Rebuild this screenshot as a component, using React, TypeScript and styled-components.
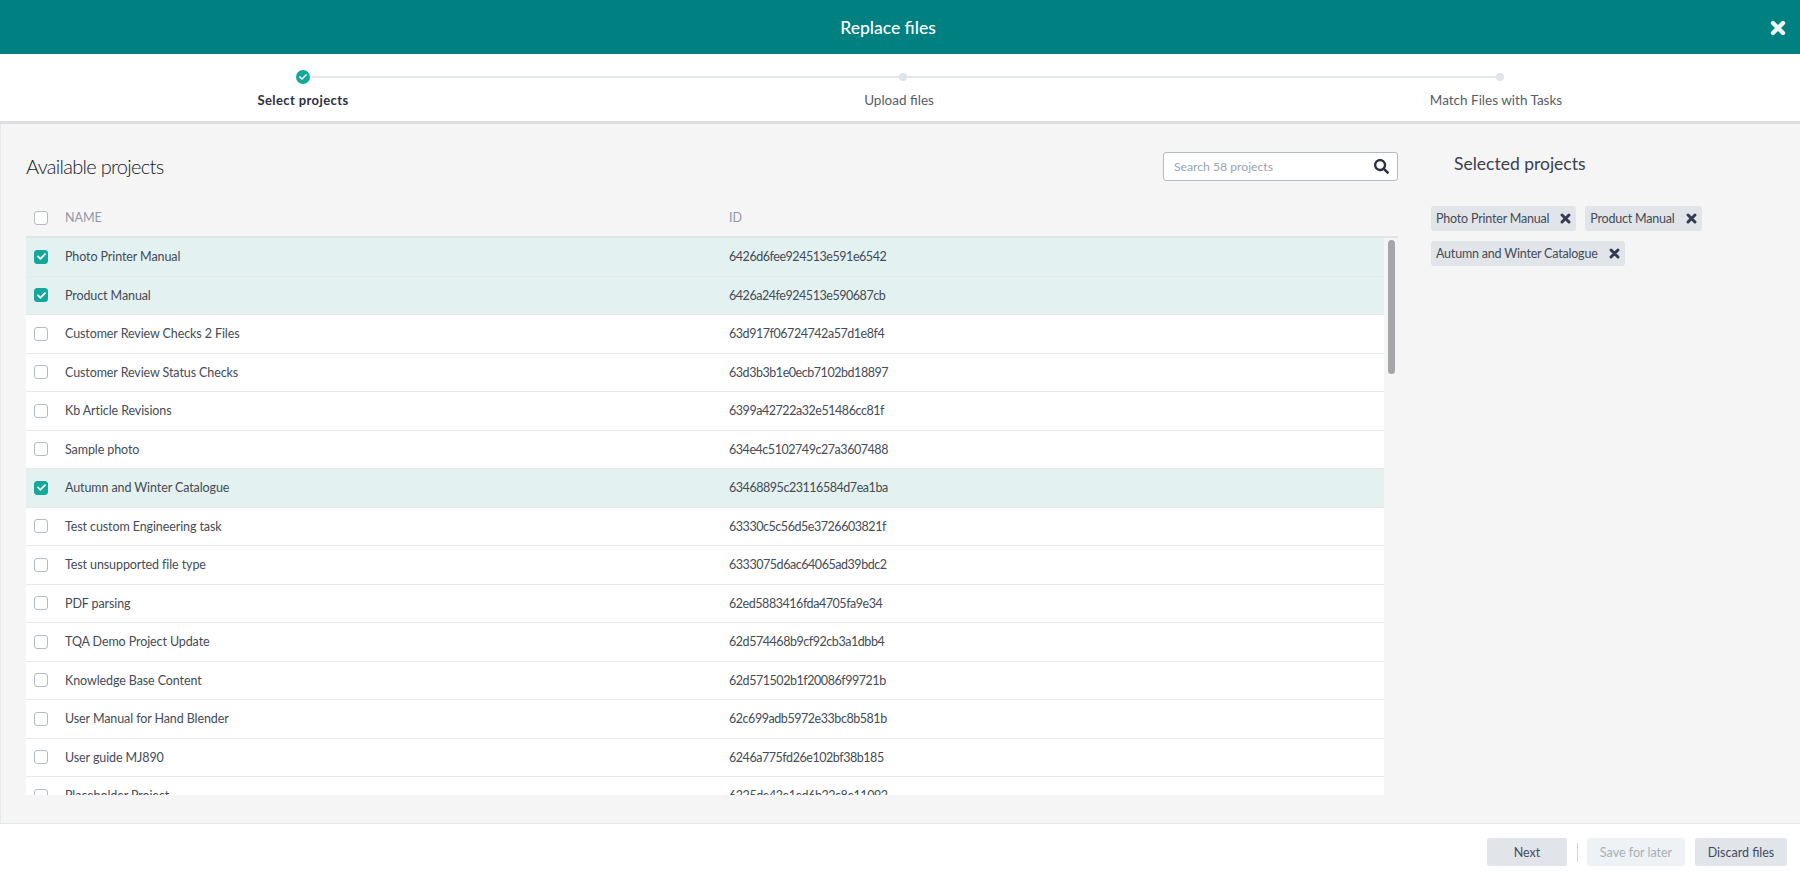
import styled, { createGlobalStyle } from "styled-components";
import { FaCheck, FaSearch } from "react-icons/fa";

const projects = [
  { name: "Photo Printer Manual", id: "6426d6fee924513e591e6542", selected: true },
  { name: "Product Manual", id: "6426a24fe924513e590687cb", selected: true },
  { name: "Customer Review Checks 2 Files", id: "63d917f06724742a57d1e8f4" },
  { name: "Customer Review Status Checks", id: "63d3b3b1e0ecb7102bd18897" },
  { name: "Kb Article Revisions", id: "6399a42722a32e51486cc81f" },
  { name: "Sample photo", id: "634e4c5102749c27a3607488" },
  { name: "Autumn and Winter Catalogue", id: "63468895c23116584d7ea1ba", selected: true },
  { name: "Test custom Engineering task", id: "63330c5c56d5e3726603821f" },
  { name: "Test unsupported file type", id: "6333075d6ac64065ad39bdc2" },
  { name: "PDF parsing", id: "62ed5883416fda4705fa9e34" },
  { name: "TQA Demo Project Update", id: "62d574468b9cf92cb3a1dbb4" },
  { name: "Knowledge Base Content", id: "62d571502b1f20086f99721b" },
  { name: "User Manual for Hand Blender", id: "62c699adb5972e33bc8b581b" },
  { name: "User guide MJ890", id: "6246a775fd26e102bf38b185" },
  { name: "Placeholder Project", id: "6225de42e1ed6b22c8e11092" },
];

const chips = ["Photo Printer Manual", "Product Manual", "Autumn and Winter Catalogue"];

const CloseIcon = ({ size }: { size: number }) => (
  <svg width={size} height={size} viewBox="0 0 14 14" fill="none">
    <path d="M2.6 2.6L11.4 11.4M11.4 2.6L2.6 11.4" stroke="currentColor" strokeWidth="3.8" strokeLinecap="round" />
  </svg>
);

const App = () => {
  return (
    <Page>
      <GlobalStyle />
      <Header>
        <HeaderTitle>Replace files</HeaderTitle>
        <CloseButton>
          <CloseIcon size={16} />
        </CloseButton>
      </Header>
      <Stepper>
        <Step>
          <DoneDot>
            <FaCheck />
          </DoneDot>
          <StepLabel $active>Select projects</StepLabel>
        </Step>
        <Step>
          <Dot />
          <StepLabel>Upload files</StepLabel>
        </Step>
        <Step>
          <Dot />
          <StepLabel>Match Files with Tasks</StepLabel>
        </Step>
      </Stepper>
      <Content>
        <Available>
          <TopRow>
            <Heading>Available projects</Heading>
            <SearchBox>
              <SearchText>Search 58 projects</SearchText>
              <FaSearch />
            </SearchBox>
          </TopRow>
          <TableHead>
            <CheckBox />
            <span>NAME</span>
            <span>ID</span>
          </TableHead>
          <TableWrap>
            <Rows>
              {projects.map((p) => (
                <Row key={p.id} $selected={p.selected}>
                  <CheckBox $checked={p.selected}>{p.selected && <FaCheck />}</CheckBox>
                  <NameCell>{p.name}</NameCell>
                  <IdCell>{p.id}</IdCell>
                </Row>
              ))}
            </Rows>
            <ScrollTrack>
              <ScrollThumb />
            </ScrollTrack>
          </TableWrap>
        </Available>
        <SelectedPanel>
          <SelectedHeading>Selected projects</SelectedHeading>
          <ChipList>
            {chips.map((c) => (
              <Chip key={c}>
                {c}
                <CloseIcon size={11} />
              </Chip>
            ))}
          </ChipList>
        </SelectedPanel>
      </Content>
      <Footer>
        <FooterButton $width={80}>Next</FooterButton>
        <Separator />
        <FooterButton $width={98} $disabled>
          Save for later
        </FooterButton>
        <FooterButton $width={92}>Discard files</FooterButton>
      </Footer>
    </Page>
  );
};

export default App;

const GlobalStyle = createGlobalStyle`
  html, body {
    margin: 0;
    padding: 0;
  }
  body {
    font-family: "Lato", "Liberation Sans", sans-serif;
    font-size: 13px;
    color: #454b56;
  }
  * {
    box-sizing: border-box;
  }
`;

const Page = styled.div`
  width: 1800px;
  height: 876px;
  display: flex;
  flex-direction: column;
  overflow: hidden;
  background-color: #fff;
`;

const Header = styled.header`
  height: 54px;
  flex: none;
  display: flex;
  align-items: center;
  justify-content: center;
  padding-right: 24px;
  position: relative;
  background-color: #008080;
`;

const HeaderTitle = styled.div`
  font-size: 17.5px;
  font-weight: 500;
  color: #fff;
`;

const CloseButton = styled.div`
  position: absolute;
  right: 14px;
  top: 20px;
  display: flex;
  color: #eef5f5;
`;

const Stepper = styled.div`
  height: 70px;
  flex: none;
  display: grid;
  grid-template-columns: 600px 600px 594px;
  align-items: start;
  padding: 16px 0 0 3px;
  background-color: #fff;
  border-bottom: 3px solid #dfdfe1;
  background-image: linear-gradient(#e4e8ed, #e4e8ed);
  background-repeat: no-repeat;
  background-size: 1197px 2px;
  background-position: 303px 22px;
`;

const Step = styled.div`
  display: flex;
  flex-direction: column;
  align-items: center;
`;

const DoneDot = styled.div`
  width: 14px;
  height: 14px;
  flex: none;
  border-radius: 50%;
  background-color: #13a89b;
  color: #fff;
  font-size: 8px;
  display: flex;
  align-items: center;
  justify-content: center;
`;

const Dot = styled.div`
  width: 8px;
  height: 8px;
  flex: none;
  margin: 3px 0;
  border-radius: 50%;
  background-color: #dfe4ea;
`;

const StepLabel = styled.div<{ $active?: boolean }>`
  margin-top: 7px;
  margin-right: ${(p) => (p.$active ? 0 : 8)}px;
  font-size: ${(p) => (p.$active ? 13 : 13.5)}px;
  letter-spacing: ${(p) => (p.$active ? 0.4 : 0)}px;
  line-height: 18px;
  white-space: nowrap;
  font-weight: ${(p) => (p.$active ? 700 : 400)};
  color: ${(p) => (p.$active ? "#2b3040" : "#565c68")};
`;

const Content = styled.main`
  flex: 1;
  min-height: 0;
  display: flex;
  background-color: #f5f5f5;
  border-bottom: 1px solid #e3e8ea;
  box-shadow: inset 1px 0 0 #e6e9ea;
`;

const Available = styled.section`
  width: 1398px;
  flex: none;
  display: flex;
  flex-direction: column;
  padding-left: 26px;
  padding-top: 28px;
`;

const TopRow = styled.div`
  display: flex;
  align-items: center;
  justify-content: space-between;
  height: 29px;
`;

const Heading = styled.h2`
  margin: 0;
  font-size: 20px;
  letter-spacing: -0.7px;
  font-weight: 300;
  color: #14181f;
  position: relative;
  top: -1px;
`;

const SearchBox = styled.div`
  width: 235px;
  height: 29px;
  display: flex;
  align-items: center;
  justify-content: space-between;
  padding: 0 8px 0 10px;
  background-color: #fff;
  border: 1px solid #b3bac6;
  border-radius: 3px;
  font-size: 15px;
  color: #2b3040;
`;

const SearchText = styled.span`
  font-size: 12.2px;
  color: #9aa3b2;
`;

const TableHead = styled.div`
  height: 41px;
  margin-top: 16px;
  padding-top: 2px;
  display: grid;
  grid-template-columns: 31px 664px 1fr;
  align-items: center;
  padding-left: 8px;
  font-size: 12.5px;
  color: #8f98a8;
  border-bottom: 2px solid #dfe6e8;
`;

const TableWrap = styled.div`
  flex: 1;
  min-height: 0;
  margin-bottom: 28px;
  display: flex;
  overflow: hidden;
`;

const Rows = styled.div`
  width: 1358px;
  flex: none;
`;

const Row = styled.div<{ $selected?: boolean }>`
  height: 38.5px;
  display: grid;
  grid-template-columns: 31px 664px 1fr;
  align-items: center;
  padding-left: 8px;
  background-color: ${(p) => (p.$selected ? "#e3f1f0" : "#fff")};
  border-bottom: 1px solid #e3e9ec;
`;

const NameCell = styled.span`
  font-size: 12.5px;
  letter-spacing: -0.1px;
  white-space: nowrap;
`;

const IdCell = styled.span`
  font-size: 12.5px;
  letter-spacing: -0.45px;
`;

const CheckBox = styled.div<{ $checked?: boolean }>`
  width: 14px;
  height: 14px;
  display: flex;
  align-items: center;
  justify-content: center;
  font-size: 9px;
  color: #fff;
  border-radius: 3px;
  border: 1px solid ${(p) => (p.$checked ? "#13a89b" : "#b3bac6")};
  background-color: ${(p) => (p.$checked ? "#13a89b" : "#fff")};
`;

const ScrollTrack = styled.div`
  flex: 1;
  padding: 2px 3px 0 4px;
`;

const ScrollThumb = styled.div`
  height: 134px;
  border-radius: 4px;
  background-color: #a3a5a8;
`;

const SelectedPanel = styled.aside`
  flex: 1;
  padding: 28px 0 0 33px;
`;

const SelectedHeading = styled.h3`
  margin: 0 0 0 23px;
  font-size: 17.5px;
  line-height: 24px;
  font-weight: 400;
  color: #3b404c;
`;

const ChipList = styled.div`
  display: flex;
  flex-wrap: wrap;
  gap: 10px 9px;
  margin-top: 30px;
  width: 320px;
`;

const Chip = styled.div`
  height: 25px;
  display: flex;
  align-items: center;
  gap: 11px;
  padding: 0 5px;
  border-radius: 3px;
  background-color: #e1e5ea;
  font-size: 12.5px;
  letter-spacing: -0.2px;
  color: #454b56;
  svg {
    color: #343a52;
  }
`;

const Footer = styled.footer`
  height: 52px;
  flex: none;
  display: flex;
  align-items: center;
  justify-content: flex-end;
  gap: 10px;
  padding: 4px 13px 0 0;
  background-color: #fff;
`;

const FooterButton = styled.div<{ $width: number; $disabled?: boolean }>`
  width: ${(p) => p.$width}px;
  height: 28px;
  display: flex;
  align-items: center;
  justify-content: center;
  border-radius: 3px;
  font-size: 12.5px;
  color: ${(p) => (p.$disabled ? "#a8afb9" : "#454b5e")};
  background-color: ${(p) => (p.$disabled ? "#eff2f5" : "#e1e5ea")};
`;

const Separator = styled.div`
  width: 1px;
  height: 19px;
  margin-right: -1px;
  background-color: #d4d6d9;
`;
